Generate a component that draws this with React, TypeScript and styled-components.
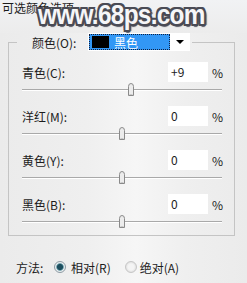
import React from "react";
import styled, { createGlobalStyle } from "styled-components";

const GlobalStyle = createGlobalStyle`
    html,
    body {
        margin: 0;
        padding: 0;
        background: #ececec;
    }
    * {
        box-sizing: border-box;
    }
`;

const Dialog = styled.div`
    position: relative;
    width: 247px;
    height: 283px;
    overflow: hidden;
    font-family: "Noto Sans CJK SC", "Liberation Sans", sans-serif;
    font-size: 12px;
    color: #1c1c1c;
    background: linear-gradient(
        90deg,
        #ebebeb 0%,
        #efefef 35%,
        #f6f6f6 55%,
        #efefef 75%,
        #ebebeb 100%
    );
`;

const TitleBar = styled.div`
    height: 33px;
    padding: 0 0 0 2px;
    line-height: 15px;
    background: linear-gradient(#f1f2f4, #ececec);
`;

// the site watermark painted over the dialog
const Watermark = styled.div`
    position: absolute;
    left: 38px;
    top: 1px;
    line-height: 28px;
    font-family: "Liberation Sans", sans-serif;
    font-weight: 700;
    font-size: 28px;
    letter-spacing: -0.8px;
    transform: scaleX(0.87);
    transform-origin: left top;
    color: #f6f6f8;
    text-shadow: 2px 0 0 #4a4b55, -2px 0 0 #4a4b55, 0 2px 0 #4a4b55, 0 -2px 0 #4a4b55,
        2px 2px 0 #4a4b55, -2px -2px 0 #4a4b55, 2px -2px 0 #4a4b55, -2px 2px 0 #4a4b55,
        1px 3px 1px #5a5b66, 3px 1px 1px #5a5b66;
    pointer-events: none;
`;

const Group = styled.fieldset`
    margin: 0 0 0 8px;
    width: 227px;
    padding: 11px 0 1px 13px;
    border: 1px solid #c4c4c4;
    display: flex;
    flex-direction: column;
    gap: 4px;
`;

const Legend = styled.legend`
    display: flex;
    align-items: center;
    margin-left: -5px;
    padding: 0 2px 0 15px;
    height: 18px;
`;

const LegendLabel = styled.span`
    width: 56px;
`;

const Select = styled.div`
    display: flex;
    align-items: center;
    width: 102px;
    height: 18px;
    background: #fff;
    padding: 1px;
`;

const Highlight = styled.div`
    display: flex;
    align-items: center;
    width: 81px;
    height: 16px;
    background: #3297f5;
    border: 1px dotted #102040;
    color: #fff;
    padding-left: 2px;
`;

const Swatch = styled.span`
    width: 17px;
    height: 12px;
    background: #000;
    margin-right: 5px;
`;

const Arrow = styled.span`
    flex: 1;
    display: flex;
    justify-content: center;
    &::after {
        content: "";
        border-left: 4px solid transparent;
        border-right: 4px solid transparent;
        border-top: 4px solid #000;
    }
`;

const Block = styled.div`
    display: flex;
    flex-direction: column;
`;

const Row = styled.div`
    display: grid;
    grid-template-columns: 1fr 40px 26px;
    align-items: center;
    height: 20px;
`;

const Field = styled.div`
    height: 20px;
    background: #fff;
    padding-left: 3px;
    line-height: 20px;
`;

const Percent = styled.span`
    padding-left: 4px;
`;

const Track = styled.div`
    position: relative;
    width: 200px;
    height: 20px;
    &::before {
        content: "";
        position: absolute;
        left: 0;
        right: 0;
        top: 7px;
        height: 1px;
        background: #a9a9a9;
        box-shadow: 0 1px 0 #fff;
    }
`;

const Thumb = styled.svg`
    position: absolute;
    top: 1px;
`;

const Method = styled.div`
    display: flex;
    align-items: center;
    height: 16px;
    margin: 23px 0 0 16px;
`;

const MethodLabel = styled.span`
    width: 38px;
`;

const Radio = styled.span<{ checked?: boolean }>`
    width: 12px;
    height: 12px;
    border-radius: 50%;
    margin-right: ${(p) => (p.checked ? "5px" : "3px")};
    border: 1px solid ${(p) => (p.checked ? "#8d9ba3" : "#c6c6c6")};
    background: ${(p) =>
        p.checked
            ? "radial-gradient(circle, #1d4e5e 0 2.6px, #4b8796 3.2px, #e9eef0 4.2px)"
            : "radial-gradient(circle, #f4f4f4 0 3px, #e2e2e2 5px)"};
`;

const Option = styled.span`
    margin-right: 14px;
`;

const channels = [
    { name: "青色(C):", value: 9 },
    { name: "洋红(M):", value: 0 },
    { name: "黄色(Y):", value: 0 },
    { name: "黑色(B):", value: 0 },
];

const App = () => {
    return (
        <Dialog>
            <GlobalStyle />
            <TitleBar>可选颜色选项</TitleBar>
            <Watermark>www.68ps.com</Watermark>
            <Group>
                <Legend>
                    <LegendLabel>颜色(O):</LegendLabel>
                    <Select>
                        <Highlight>
                            <Swatch />
                            黑色
                        </Highlight>
                        <Arrow />
                    </Select>
                </Legend>
                {channels.map((c) => (
                    <Block key={c.name}>
                        <Row>
                            <span>{c.name}</span>
                            <Field>{c.value > 0 ? `+${c.value}` : c.value}</Field>
                            <Percent>%</Percent>
                        </Row>
                        <Track>
                            <Thumb
                                width="8"
                                height="14"
                                viewBox="0 0 8 14"
                                style={{ left: 96 + c.value }}
                            >
                                <path
                                    d="M1.5 3.5 Q1.5 0.5 4 0.5 Q6.5 0.5 6.5 3.5 L6.5 12.5 L1.5 12.5 Z"
                                    fill="#ececec"
                                    stroke="#8a8a8a"
                                />
                                <line x1="2.5" y1="11.5" x2="5.5" y2="11.5" stroke="#c9c9c9" />
                            </Thumb>
                        </Track>
                    </Block>
                ))}
            </Group>
            <Method>
                <MethodLabel>方法:</MethodLabel>
                <Radio checked />
                <Option>相对(R)</Option>
                <Radio />
                <span>绝对(A)</span>
            </Method>
        </Dialog>
    );
};

export default App;
